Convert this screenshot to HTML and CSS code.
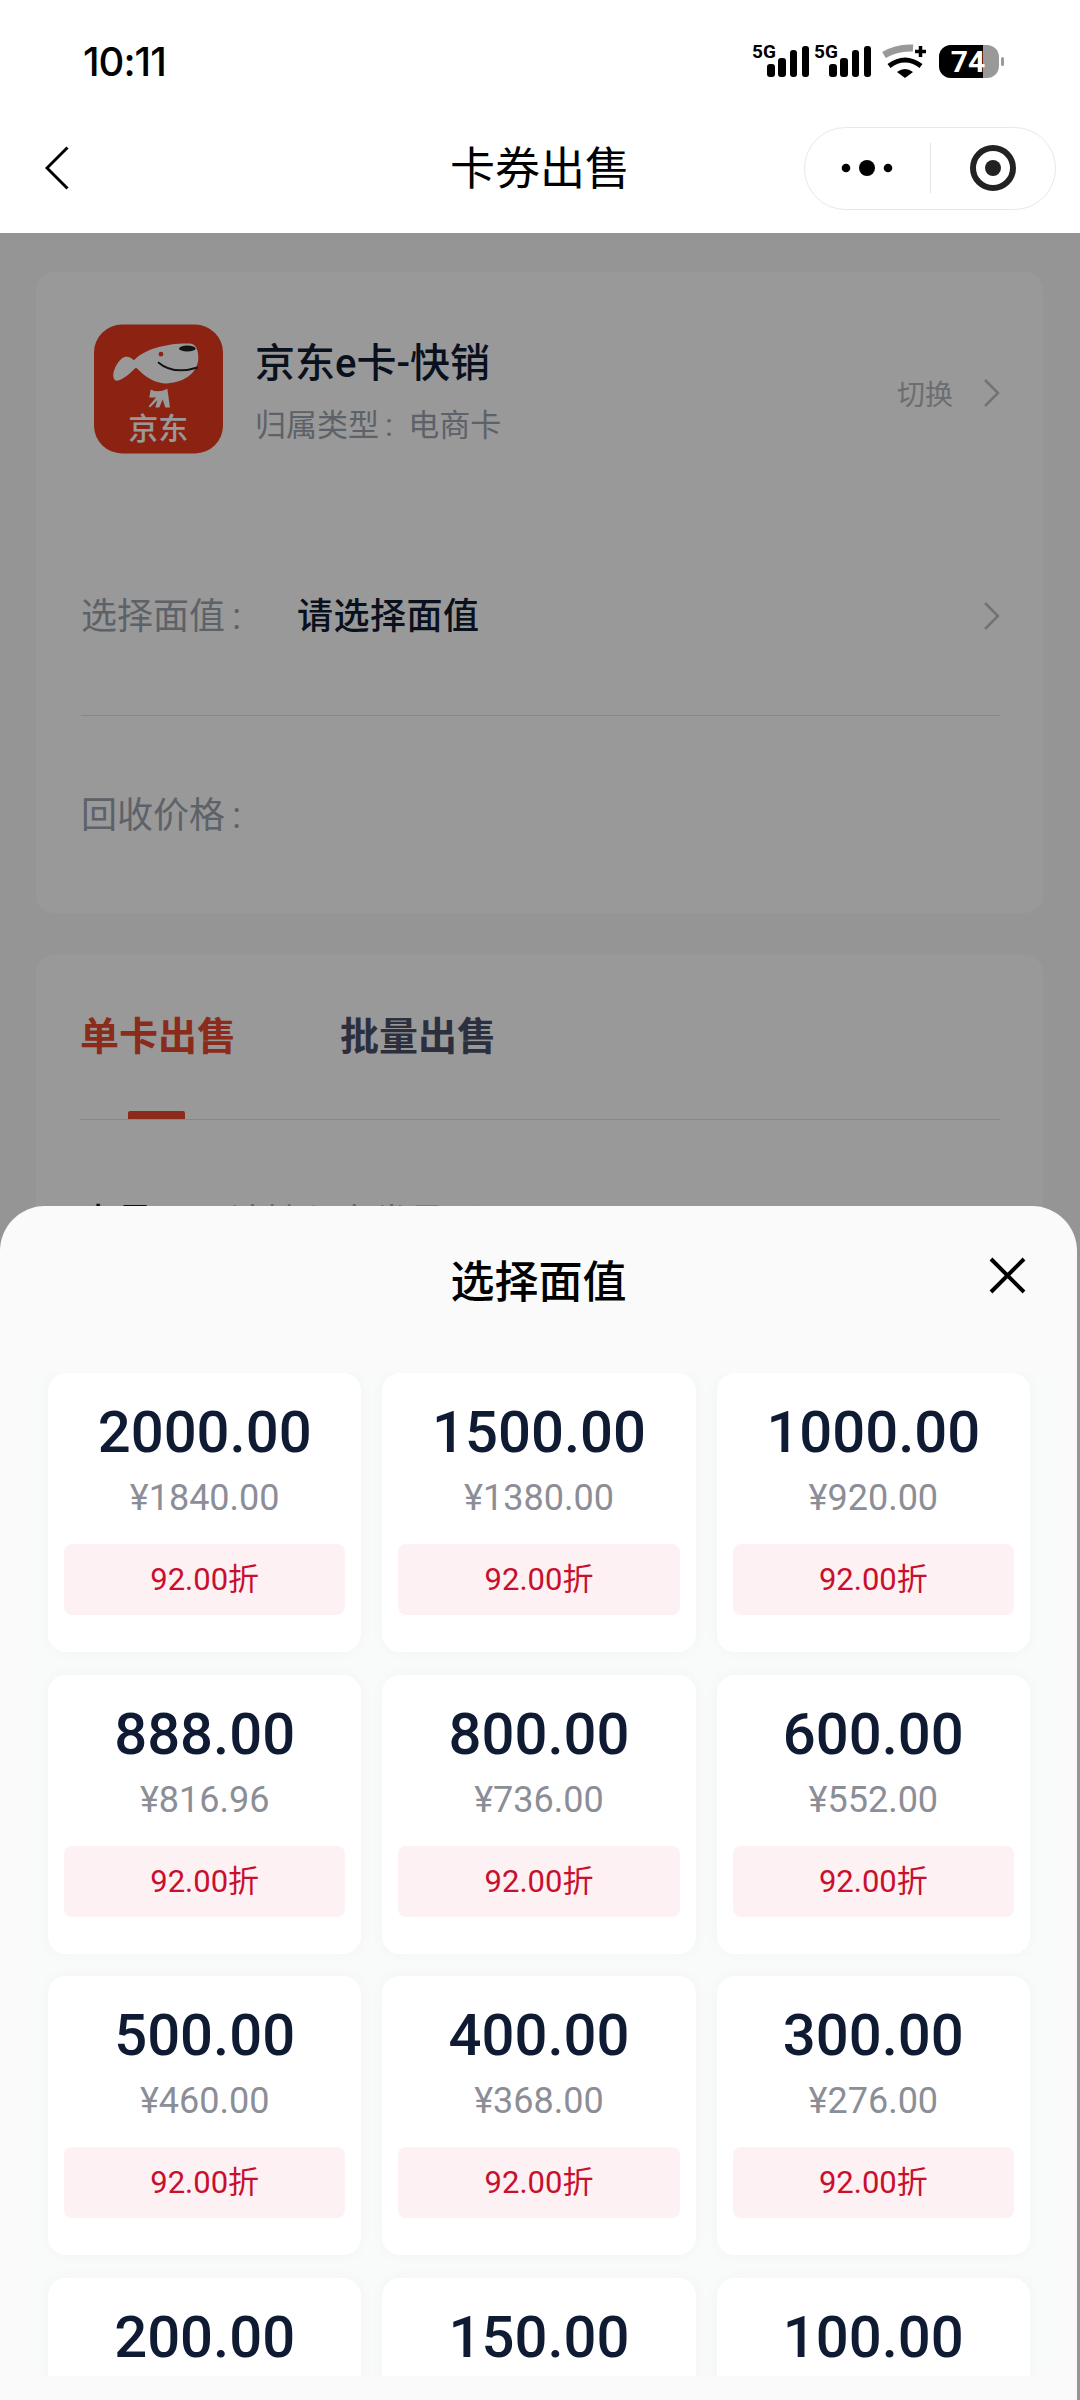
FILE: index.html
```html
<!DOCTYPE html>
<html>
<head>
    <meta charset="utf-8">
    <title>卡券出售</title>
    <link rel="stylesheet" href="styles.css">
</head>
<body>
<div class="phone">
    <header class="top">
        <div class="status">
            <span class="time">10:11</span>
            <svg class="status-icons" width="256" height="40" viewBox="750 40 256 40">
                <text class="net" x="752" y="57">5G</text>
                <rect x="767" y="63" width="8" height="13" rx="3"/>
                <rect x="778" y="57" width="8" height="19" rx="3"/>
                <rect x="790" y="49" width="7" height="27" rx="3"/>
                <rect x="802" y="45" width="7" height="31" rx="3"/>
                <text class="net" x="814" y="57">5G</text>
                <rect x="829" y="63" width="8" height="13" rx="3"/>
                <rect x="840" y="57" width="8" height="19" rx="3"/>
                <rect x="852" y="49" width="7" height="27" rx="3"/>
                <rect x="864" y="45" width="7" height="31" rx="3"/>
                <path d="M884 54Q897 46 913 47" fill="none" stroke="#999" stroke-width="7"/>
                <path d="M889 65Q905 53 921 65" fill="none" stroke="#000" stroke-width="5"/>
                <path d="M897 71Q905 65 913 71L905 77z"/>
                <path d="M920.500 45v11M915 50.500h11" stroke="#000" stroke-width="3.500"/>
                <rect x="939" y="44" width="60" height="33" rx="12" fill="#999"/>
                <path d="M983 44H951a12 12 0 0 0-12 12v9a12 12 0 0 0 12 12h32z"/>
                <rect x="1001" y="56" width="3" height="9" rx="1.500" fill="#999"/>
                <text class="batt" x="968" y="71" text-anchor="middle">74</text>
            </svg>
        </div>
        <nav class="nav">
            <svg class="back" width="24" height="44" viewBox="0 0 24 44"><path d="M22.500 1.500L2 22l20.500 20.500" fill="none" stroke="#000" stroke-width="3"/></svg>
            <div class="nav-title">卡券出售</div>
            <div class="capsule">
                <div class="cap-btn">
                    <svg width="56" height="18" viewBox="0 0 56 18"><circle cx="7" cy="9" r="4.300"/><circle cx="28" cy="9" r="8"/><circle cx="49" cy="9" r="4.300"/></svg>
                </div>
                <div class="cap-line"></div>
                <div class="cap-btn">
                    <svg width="48" height="48" viewBox="0 0 48 48"><circle cx="24" cy="24" r="20" fill="none" stroke="#222" stroke-width="6"/><circle cx="24" cy="24" r="8" fill="#222"/></svg>
                </div>
            </div>
        </nav>
    </header>

    <main class="page">
        <section class="panel info">
            <div class="brand">
                <svg class="jd-logo" width="129" height="130" viewBox="192 193 387 387">
                    <rect x="192" y="193" width="387" height="387" rx="84" fill="#e8391f"/>
                    <path d="M255 360C240 345 262 298 285 290C298 288 305 295 312 300C345 265 415 248 480 250C498 252 505 268 505 295C503 335 470 365 410 370C375 370 345 350 318 322C300 340 270 368 255 360z" fill="#fff"/>
                    <circle cx="393" cy="282" r="7" fill="#e8391f"/>
                    <ellipse cx="472" cy="265" rx="25" ry="9" fill="#222"/>
                    <path d="M384 306Q430 345 503 322" fill="none" stroke="#222" stroke-width="6"/>
                    <path d="M362 388Q385 400 412 386L420 442L406 442L398 418L388 442L376 442L382 420L360 442L356 438L378 412L358 412z" fill="#fff"/>
                    <text class="jd-name" x="385" y="536" text-anchor="middle">京东</text>
                </svg>
                <div class="brand-text">
                    <div class="brand-name">京东e卡-快销</div>
                    <div class="brand-type">归属类型&#8201;:&nbsp; 电商卡</div>
                </div>
                <div class="switch">
                    <span>切换</span>
                    <svg class="chev" width="17" height="30" viewBox="0 0 17 30"><path d="M2 2l13 13L2 28" fill="none" stroke="#bcbfc6" stroke-width="2.500"/></svg>
                </div>
            </div>
            <div class="row row-pick">
                <span class="row-label">选择面值&#8201;:</span>
                <span class="row-value">请选择面值</span>
                <svg class="chev" width="17" height="30" viewBox="0 0 17 30"><path d="M2 2l13 13L2 28" fill="none" stroke="#bcbfc6" stroke-width="2.500"/></svg>
            </div>
            <div class="row row-price">
                <span class="row-label">回收价格&#8201;:</span>
            </div>
        </section>

        <section class="panel sell">
            <div class="tabs">
                <div class="tab tab-on">单卡出售</div>
                <div class="tab">批量出售</div>
            </div>
            <div class="card-no">
                <span class="no-label">卡号</span>
                <span class="no-hint">请输入卡券号码</span>
            </div>
        </section>
    </main>

    <div class="mask"></div>

    <section class="sheet">
        <div class="sheet-title">选择面值</div>
        <svg class="close" width="37" height="37" viewBox="0 0 37 37"><path d="M2 2l33 33M35 2L2 35" fill="none" stroke="#000" stroke-width="4"/></svg>
        <div class="values">
            <div class="value-card"><div class="amount">2000.00</div><div class="price">¥1840.00</div><div class="rate">92.00折</div></div>
            <div class="value-card"><div class="amount">1500.00</div><div class="price">¥1380.00</div><div class="rate">92.00折</div></div>
            <div class="value-card"><div class="amount">1000.00</div><div class="price">¥920.00</div><div class="rate">92.00折</div></div>
            <div class="value-card"><div class="amount">888.00</div><div class="price">¥816.96</div><div class="rate">92.00折</div></div>
            <div class="value-card"><div class="amount">800.00</div><div class="price">¥736.00</div><div class="rate">92.00折</div></div>
            <div class="value-card"><div class="amount">600.00</div><div class="price">¥552.00</div><div class="rate">92.00折</div></div>
            <div class="value-card"><div class="amount">500.00</div><div class="price">¥460.00</div><div class="rate">92.00折</div></div>
            <div class="value-card"><div class="amount">400.00</div><div class="price">¥368.00</div><div class="rate">92.00折</div></div>
            <div class="value-card"><div class="amount">300.00</div><div class="price">¥276.00</div><div class="rate">92.00折</div></div>
            <div class="value-card"><div class="amount">200.00</div></div>
            <div class="value-card"><div class="amount">150.00</div></div>
            <div class="value-card"><div class="amount">100.00</div></div>
        </div>
    </section>
</div>
</body>
</html>
```

FILE: styles.css
```css
body {
    margin: 0;
    font-family: Roboto, "Noto Sans CJK SC", sans-serif;
    color: #0f1b33;
}

.phone {
    position: relative;
    width: 1080px;
    height: 2400px;
    overflow: hidden;
    background-color: #f8f8f8;
}

/* top white bar, stays above the mask */
.top {
    position: relative;
    z-index: 2;
    height: 233px;
    background-color: #fff;
}

.status {
    display: flex;
    justify-content: space-between;
    align-items: center;
    box-sizing: border-box;
    height: 115px;
    padding: 7px 74px 0 83px;
    color: #000;
}

.time {
    font-family: Inter, sans-serif;
    font-size: 40px;
    font-weight: 500;
    letter-spacing: -1px;
}

.status-icons text {
    font-weight: 700;
}

.net {
    font-size: 19px;
}

.batt {
    font-size: 30px;
    fill: #fff;
}

.nav {
    display: grid;
    grid-template-columns: 1fr auto 1fr;
    align-items: center;
    height: 106px;
}

.back {
    margin-left: 45px;
}

.nav-title {
    margin-top: -6px;
    font-size: 45px;
    color: #000;
}

.capsule {
    display: flex;
    align-items: center;
    justify-self: end;
    box-sizing: border-box;
    width: 252px;
    height: 83px;
    margin-right: 24px;
    border: 1px solid #e8e8e8;
    border-radius: 42px;
}

.cap-btn {
    display: flex;
    flex: 1;
    justify-content: center;
}

.cap-line {
    width: 1px;
    height: 50px;
    background-color: #e4e4e4;
}

.page {
    padding: 39px 37px 0 36px;
}

.panel {
    box-sizing: border-box;
    background-color: #fff;
    border-radius: 18px;
    padding: 0 43px 0 45px;
}

.info {
    height: 641px;
    padding-top: 52px;
    margin-bottom: 42px;
}

.brand {
    display: flex;
    align-items: center;
    height: 130px;
    margin-bottom: 62px;
    padding-left: 13px;
}

.brand-text {
    flex: 1;
    margin-top: 8px;
    margin-left: 32px;
}

.brand-name {
    font-size: 40px;
    font-weight: 500;
    line-height: 50px;
}

.brand-type {
    font-size: 31px;
    line-height: 44px;
    margin-top: 15px;
    color: #9ca3af;
}

.jd-name {
    font-size: 90px;
    font-weight: 500;
    fill: #fff;
}

.switch {
    display: flex;
    align-items: center;
    gap: 30px;
    margin-top: 8px;
    font-size: 28px;
    color: #b3b6bd;
}

.row {
    display: flex;
    align-items: center;
    font-size: 36px;
}

.row-pick {
    height: 199px;
    border-bottom: 1px solid #e2e3e6;
}

.row-price {
    height: 197px;
}

.row-label {
    width: 216px;
    margin-top: -6px;
    color: #9ca3af;
}

.row-value {
    flex: 1;
    margin-top: -6px;
    font-weight: 500;
    letter-spacing: 0.5px;
}

.sell {
    height: 900px;
}

.tabs {
    display: flex;
    gap: 104px;
    height: 164px;
    margin-left: -1px;
    border-bottom: 1px solid #e2e3e6;
}

.tab {
    position: relative;
    font-size: 39px;
    font-weight: 700;
    line-height: 56px;
    padding-top: 54px;
    color: #4a5068;
}

.tab-on {
    color: #e8482e;
}

.tab-on::after {
    content: "";
    position: absolute;
    left: 48px;
    bottom: 0;
    width: 57px;
    height: 8px;
    border-radius: 2px 2px 0 0;
    background-color: #e8482e;
}

.card-no {
    display: flex;
    align-items: center;
    gap: 56px;
    height: 50px;
    margin-top: 74px;
    font-size: 36px;
}

.no-label {
    width: 92px;
    font-weight: 500;
}

.no-hint {
    color: #a9acb3;
}

.mask {
    position: absolute;
    top: 233px;
    left: 0;
    right: 0;
    bottom: 0;
    z-index: 1;
    background-color: rgba(0, 0, 0, 0.4);
}

.sheet {
    position: absolute;
    top: 1206px;
    left: 0;
    z-index: 3;
    display: flex;
    flex-direction: column;
    box-sizing: border-box;
    width: 1077px;
    height: 1194px;
    padding-bottom: 24px;
    border-radius: 45px 45px 0 0;
    background-color: #fafafa;
}

.sheet-title {
    box-sizing: border-box;
    height: 167px;
    padding-top: 47px;
    font-size: 44px;
    font-weight: 500;
    line-height: 60px;
    text-align: center;
    color: #000;
}

.close {
    position: absolute;
    top: 51px;
    right: 51px;
}

.values {
    flex: 1;
    display: grid;
    grid-template-columns: repeat(3, 1fr);
    grid-auto-rows: 279px;
    gap: 22.67px 21px;
    width: 982px;
    margin-left: 24px;
    padding: 0 24px;
    overflow: hidden;
    background-color: #f9fafa;
}

.value-card {
    box-sizing: border-box;
    height: 279px;
    padding: 27px 16px 0;
    border-radius: 18px;
    background-color: #fff;
    box-shadow: 0 0 16px rgba(0, 30, 30, 0.03);
    text-align: center;
}

.amount {
    font-size: 58px;
    font-weight: 500;
    line-height: 64px;
}

.price {
    font-size: 36px;
    line-height: 44px;
    margin-top: 12px;
    color: #8b8e97;
}

.rate {
    height: 71px;
    margin-top: 24px;
    border-radius: 8px;
    font-size: 31px;
    line-height: 71px;
    background-color: #fdf1f3;
    color: #c8102e;
}
```
